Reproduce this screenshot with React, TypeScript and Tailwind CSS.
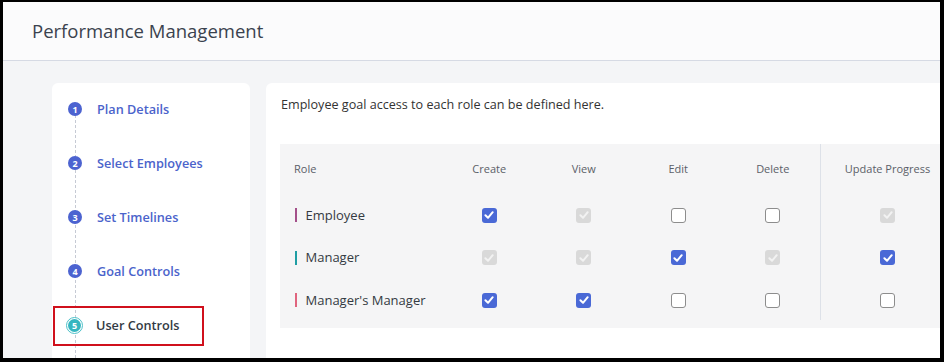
import React from 'react';

type Box = 'on' | 'off' | 'lock';

interface RoleRow {
  name: string;
  bar: string;
  boxes: Box[];
}

const steps = ['Plan Details', 'Select Employees', 'Set Timelines', 'Goal Controls', 'User Controls'];

const roles: RoleRow[] = [
  { name: 'Employee', bar: 'bg-[#a4508a]', boxes: ['on', 'lock', 'off', 'off', 'lock'] },
  { name: 'Manager', bar: 'bg-[#1f9ea4]', boxes: ['lock', 'lock', 'on', 'lock', 'on'] },
  { name: "Manager's Manager", bar: 'bg-[#e0647e]', boxes: ['on', 'on', 'off', 'off', 'off'] },
];

const Check = ({ color }: { color: string }) => (
  <svg viewBox="0 0 14 14" className="w-[14px] h-[14px]">
    <path d="M3.4 7.3 L6 9.8 L10.7 4.2" fill="none" stroke={color} strokeWidth="2" strokeLinecap="round" strokeLinejoin="round" />
  </svg>
);

const CheckBox = ({ state }: { state: Box }) => {
  if (state === 'on') {
    return (
      <span className="w-[15px] h-[15px] rounded-[3px] bg-[#4a69d6] flex items-center justify-center">
        <Check color="#ffffff" />
      </span>
    );
  }
  if (state === 'lock') {
    return (
      <span className="w-[15px] h-[15px] rounded-[3px] bg-[#d9d9d9] flex items-center justify-center">
        <Check color="#f2f2f2" />
      </span>
    );
  }
  return <span className="w-[15px] h-[15px] rounded-[3px] bg-white border border-[#8d8d8d]" />;
};

export default function App() {
  return (
    <div
      className="w-[944px] h-[362px] border-l-[3px] border-t-[2px] border-r-[4px] border-b-[4px] border-black overflow-hidden bg-[#f4f5f7]"
      style={{ fontFamily: '"Open Sans", "Noto Sans", sans-serif' }}
    >
      {/* Header */}
      <div className="h-[59px] bg-[#fbfbfc] border-b border-[#d6dae4] flex items-center pl-[29px]">
        <h1 className="text-[18.5px] font-medium text-[#3a424e]">Performance Management</h1>
      </div>

      <div className="flex gap-[16px] pl-[49px] pt-[22px]">
        {/* Steps sidebar */}
        <div className="w-[198px] h-[300px] bg-white rounded-t-[6px] shrink-0 relative">
          <div className="absolute left-[23px] top-[27px] bottom-0 border-l border-dashed border-[#c6cad4]" />
          {steps.map((s, i) => {
            const active = i === 4;
            return (
              <div key={s} className="h-[54px] flex items-center relative">
                {active ? (
                  <>
                    <div className="absolute left-[1px] top-[7px] w-[151px] h-[40px] border-2 border-[#d0101c]" />
                    <span className="absolute left-[14px] top-[18px] w-[17px] h-[17px] rounded-full bg-white border border-[#4cc0c8] flex items-center justify-center">
                      <span className="w-[13px] h-[13px] rounded-full bg-[#36b6c0] text-white text-[9px] font-bold flex items-center justify-center leading-none">
                        5
                      </span>
                    </span>
                    <span className="absolute left-[44px] top-[17px] leading-[18px] text-[12.7px] font-semibold text-[#333a44]">{s}</span>
                  </>
                ) : (
                  <>
                    <span className="absolute left-[16px] top-[19px] w-[14px] h-[14px] rounded-full bg-[#4c63d0] text-white text-[9px] font-bold flex items-center justify-center leading-none">
                      {i + 1}
                    </span>
                    <span className="absolute left-[45px] top-[17px] leading-[18px] text-[12.7px] font-semibold text-[#4b63cb]">{s}</span>
                  </>
                )}
              </div>
            );
          })}
        </div>

        {/* Main card */}
        <div className="flex-1 h-[300px] bg-white rounded-t-[6px] pl-[14px] pt-[12px]">
          <p className="text-[12.6px] text-[#333] pl-[1px] h-[20px] leading-[20px]">Employee goal access to each role can be defined here.</p>

          <div className="mt-[29px] w-[700px] h-[184px] bg-[#f5f5f6] flex">
            <div className="w-[540px]">
              <div className="h-[50px] flex items-center text-[11px] text-[#5b6068]">
                <div className="w-[162px] pl-[14px]">Role</div>
                {['Create', 'View', 'Edit', 'Delete'].map((h) => (
                  <div key={h} className="w-[94.5px] text-center">{h}</div>
                ))}
              </div>
              {roles.map((r) => (
                <div key={r.name} className="h-[42.5px] flex items-center">
                  <div className="w-[162px] pl-[15px] flex items-center gap-[9px]">
                    <span className={`w-[1.5px] h-[14px] ${r.bar}`} />
                    <span className="text-[13px] text-[#343a42]">{r.name}</span>
                  </div>
                  {r.boxes.slice(0, 4).map((b, j) => (
                    <div key={j} className="w-[94.5px] flex justify-center">
                      <CheckBox state={b} />
                    </div>
                  ))}
                </div>
              ))}
            </div>
            <div className="w-[134px] border-l border-[#dde1e8] h-[176px]">
              <div className="h-[50px] flex items-center justify-center text-[11px] text-[#5b6068]">Update Progress</div>
              {roles.map((r) => (
                <div key={r.name} className="h-[42.5px] flex items-center justify-center">
                  <CheckBox state={r.boxes[4]} />
                </div>
              ))}
            </div>
          </div>
        </div>
      </div>
    </div>
  );
}
